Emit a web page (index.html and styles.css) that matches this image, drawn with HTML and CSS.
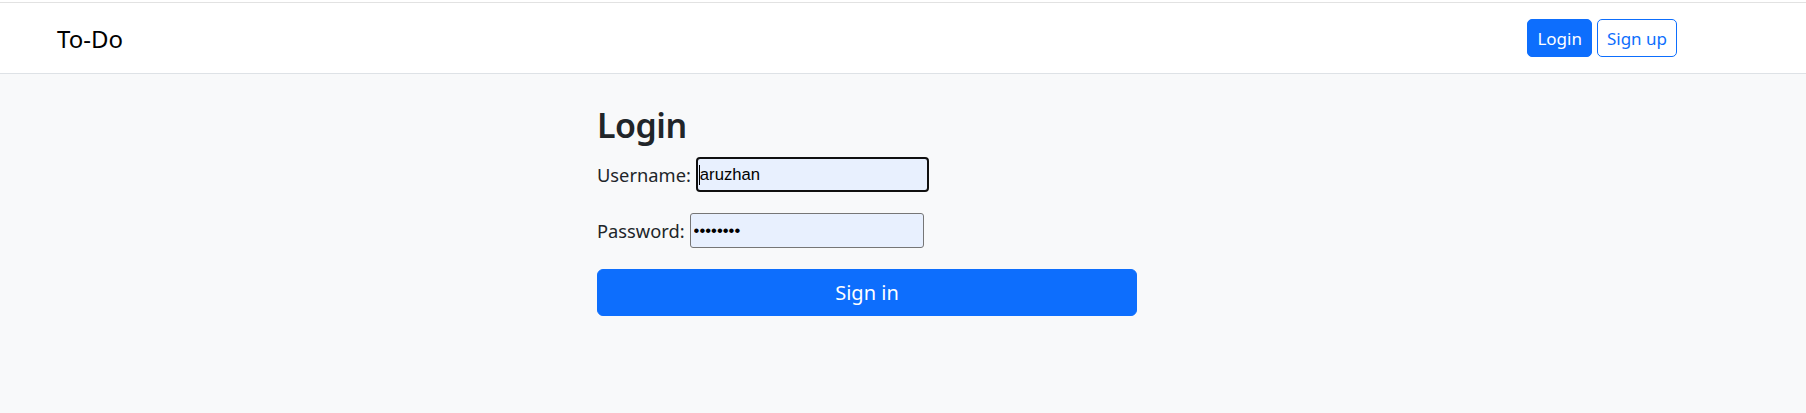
FILE: index.html
```html
<!DOCTYPE html>
<html lang="en">
<head>
<meta charset="utf-8">
<title>To-Do</title>
<link rel="stylesheet" href="styles.css">
</head>
<body>
<div class="edge"></div>
<nav class="navbar">
  <a class="brand" href="#">To-Do</a>
  <div class="nav-actions">
    <a class="btn btn-sm btn-primary" href="#">Login</a>
    <a class="btn btn-sm btn-outline" href="#">Sign up</a>
  </div>
</nav>
<main class="main">
  <section class="login">
    <h3 class="title">Login</h3>
    <form class="form">
      <div class="row">
        <label for="username">Username:</label>
        <input class="field field-focus" id="username" type="text" value="aruzhan">
      </div>
      <div class="row">
        <label for="password">Password:</label>
        <input class="field" id="password" type="password" value="12345678">
      </div>
      <button class="btn btn-primary btn-block" type="button">Sign in</button>
    </form>
  </section>
</main>
</body>
</html>
```
FILE: styles.css
```css
* { box-sizing: border-box; }
html, body { margin: 0; }
body {
  background: #f8f9fa;
  font-family: "Noto Sans", "Open Sans", sans-serif;
  font-size: 20px;
  color: #212529;
  height: 413px;
  overflow: hidden;
}
.edge {
  height: 3px;
  background: #fff;
  border-bottom: 1px solid #e2e2e2;
}
.navbar {
  height: 71px;
  background: #fff;
  border-bottom: 1px solid #dee2e6;
  display: flex;
  align-items: center;
  justify-content: space-between;
  padding: 0 129px 0 57px;
}
.brand {
  font-size: 24px;
  color: #000;
  text-decoration: none;
}
.nav-actions {
  display: flex;
  gap: 5px;
}
.btn {
  display: inline-flex;
  align-items: center;
  justify-content: center;
  border: 1px solid #0d6efd;
  border-radius: 5px;
  text-decoration: none;
  font-family: inherit;
  cursor: pointer;
}
.btn-sm {
  height: 38px;
  padding: 0 9px;
  font-size: 17px;
}
.btn-primary {
  background: #0d6efd;
  color: #fff;
}
.btn-outline {
  background: #fff;
  color: #0d6efd;
}
.main {
  padding: 30px 0 0 597px;
}
.login {
  width: 540px;
}
.title {
  margin: 0 0 11px;
  font-size: 34px;
  font-weight: 600;
  letter-spacing: -0.5px;
  line-height: 42px;
}
.form {
  display: flex;
  flex-direction: column;
}
.row {
  display: flex;
  align-items: center;
  gap: 5px;
  margin-bottom: 21px;
}
.row label {
  font-size: 18.3px;
  line-height: 30px;
}
.field {
  width: 234px;
  height: 35px;
  border: 1px solid #767676;
  border-radius: 3px;
  background: #e8f0fe;
  padding: 0 3px;
  font-family: "Liberation Sans", Arial, sans-serif;
  font-size: 16.67px;
  color: #000;
}
.field-focus {
  width: 233px;
  border: 2px solid #101010;
  border-radius: 4px;
  outline: none;
  padding-left: 2px;
  background: linear-gradient(#000, #000) no-repeat 1px 50% / 1px 20px, #e8f0fe;
}
.btn-block {
  width: 540px;
  height: 47px;
  border-radius: 6px;
  font-size: 20px;
}
```
